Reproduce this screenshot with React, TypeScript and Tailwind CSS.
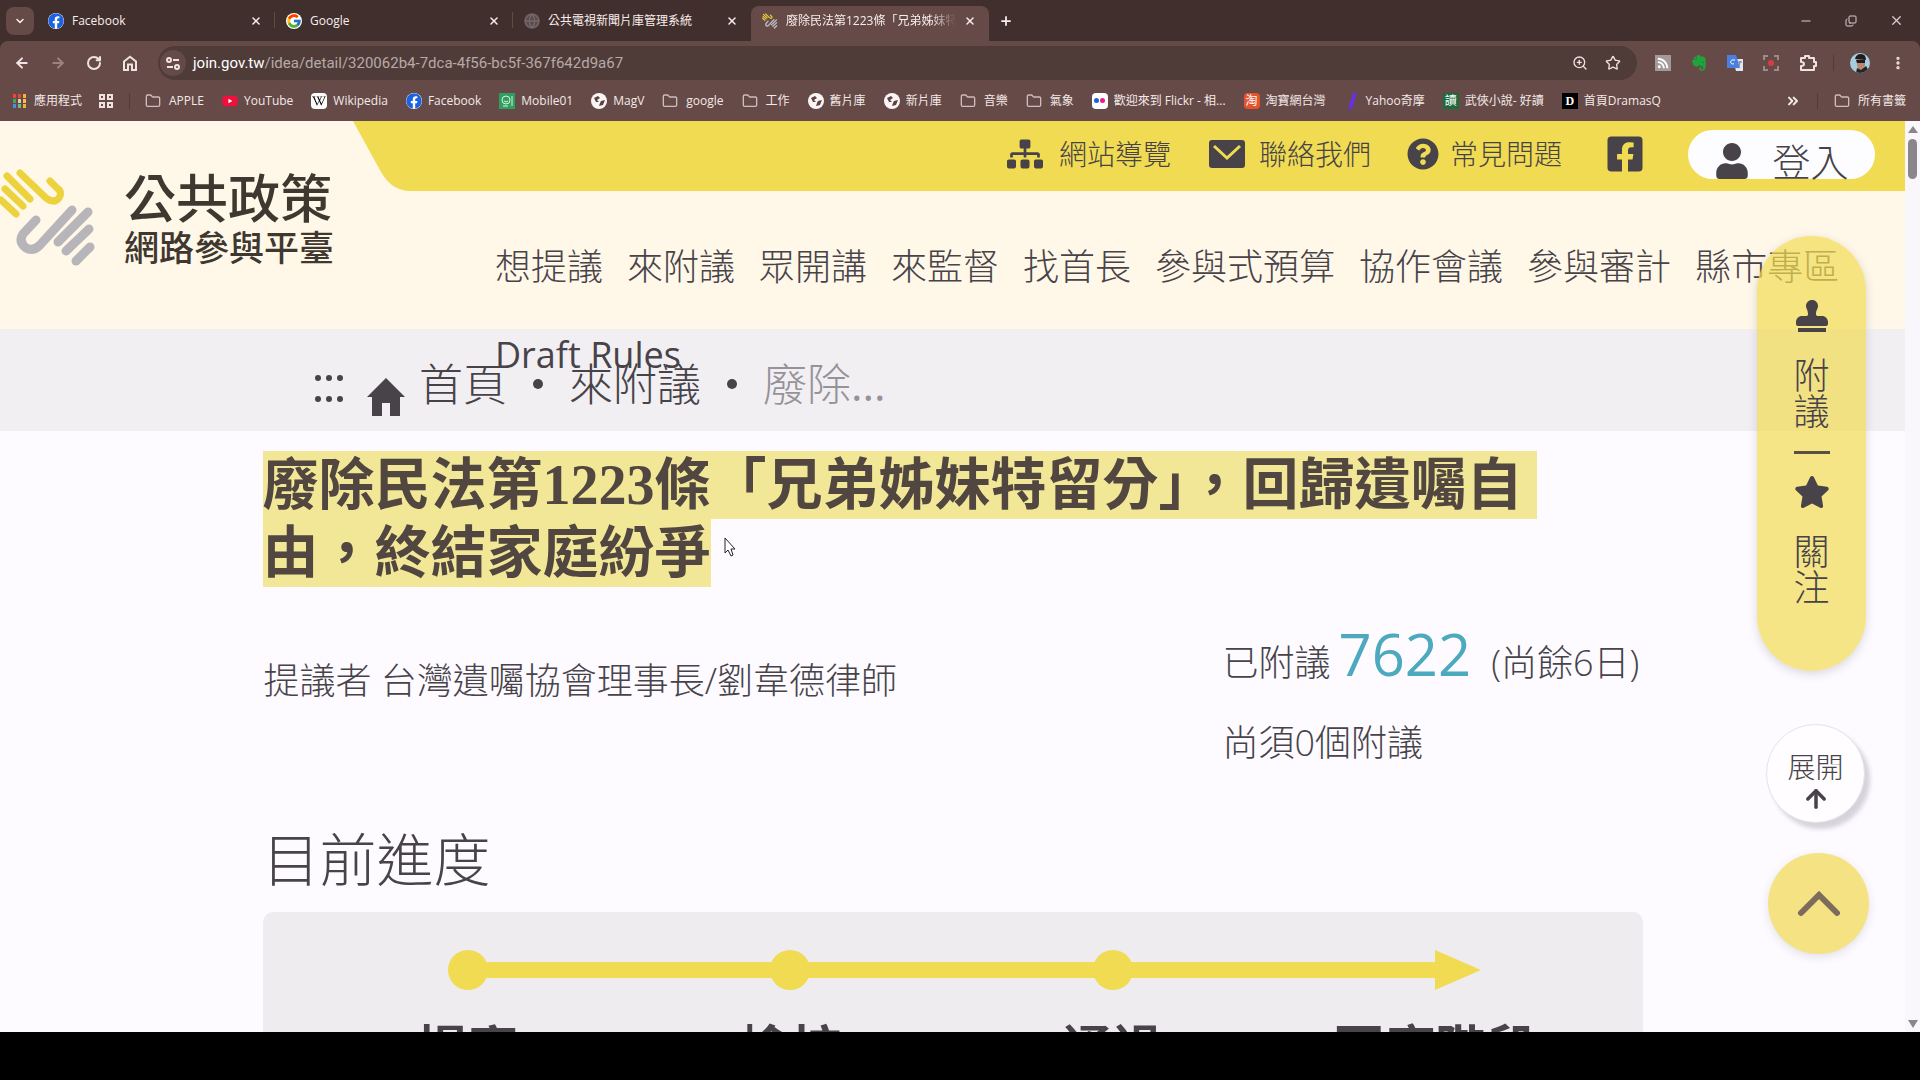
import type { ReactNode } from "react";
import {
  ArrowLeft,
  ArrowRight,
  ArrowUp,
  ChevronDown,
  ChevronsRight,
  ChevronUp,
  Copy,
  EllipsisVertical,
  Folder,
  Globe,
  Minus,
  Plus,
  RotateCw,
  Star,
  X,
  ZoomIn,
} from "lucide-react";
import {
  FaFacebook,
  FaFacebookSquare,
  FaQuestionCircle,
  FaRss,
  FaSitemap,
  FaStamp,
  FaStar,
  FaUser,
  FaWikipediaW,
  FaYoutube,
} from "react-icons/fa";
import { FcGoogle } from "react-icons/fc";
import { SiEvernote } from "react-icons/si";

const uiFont = "font-['Open_Sans','Noto_Sans_CJK_TC',sans-serif]";
const serifFont = "font-['Liberation_Serif','Noto_Sans_CJK_TC',serif]";

function HandsLogo({ className }: { className: string }) {
  return (
    <svg viewBox="0 0 96 100" className={className} fill="none" strokeLinecap="round" aria-hidden="true">
      <g stroke="#ecd23c" strokeWidth="7">
        <path d="M1 32 L16 46" />
        <path d="M5 21 L23 38" />
        <path d="M7 8 L30 31" />
        <path d="M20 5 L46 30 Q54 36 59 30 Q63 24 57 20 L50 13" />
      </g>
      <g stroke="#b7b5b9" strokeWidth="9">
        <path d="M36 52 L23 66 Q18 74 26 80 Q33 84 40 77 L72 42" />
        <path d="M88 44 L58 74" />
        <path d="M89 61 L66 83" />
        <path d="M90 79 L76 93" />
      </g>
    </svg>
  );
}

function EarthIcon() {
  return (
    <svg viewBox="0 0 16 16" className="size-4" aria-hidden="true">
      <circle cx="8" cy="8" r="8" fill="#fbf6f5" />
      <path d="M3 5 L7 3 L9 5 L6 7 L8 9 L5 9 Z M10 8 L14 7 L12 12 L8 13 L9 10 Z" fill="#5c4341" />
    </svg>
  );
}

function AppsIcon() {
  const colors = ["#e8453c", "#e8453c", "#f3b13a", "#42a65c", "#d9d2a0", "#f3c04a", "#4a8fe0", "#6fb6a0", "#efb23f"];
  return (
    <svg viewBox="0 0 16 16" className="size-4" aria-hidden="true">
      {colors.map((color, i) => (
        <rect key={i} x={1 + (i % 3) * 5} y={1 + Math.floor(i / 3) * 5} width="3" height="4" fill={color} />
      ))}
    </svg>
  );
}

function GridIcon() {
  return (
    <svg viewBox="0 0 16 16" className="size-4" fill="none" stroke="#efe3e1" strokeWidth="2" aria-hidden="true">
      <path d="M2 2h4v4H2zM10 2h4v4h-4zM2 10h4v4H2zM10 10h4v4h-4z" />
    </svg>
  );
}

function Tile({ className, children }: { className: string; children?: ReactNode }) {
  return (
    <span className={`flex size-4 shrink-0 items-center justify-center text-[12px] leading-4 ${className}`} aria-hidden="true">
      {children}
    </span>
  );
}

const folder = <Folder className="mr-[2px] size-4 text-[#cdbdbb]" strokeWidth={2} />;

const bookmarks: { label: string; icon: ReactNode }[] = [
  { label: "APPLE", icon: folder },
  {
    label: "YouTube",
    icon: (
      <span className="rounded-sm bg-[linear-gradient(#fff,#fff)] bg-[length:8px_8px] bg-center bg-no-repeat">
        <FaYoutube className="size-4 text-[#f0103c]" />
      </span>
    ),
  },
  {
    label: "Wikipedia",
    icon: (
      <Tile className="rounded-sm bg-white text-black">
        <FaWikipediaW className="size-[14px]" />
      </Tile>
    ),
  },
  { label: "Facebook", icon: <FaFacebook className="size-4 rounded-full bg-white text-[#1d62e0]" /> },
  {
    label: "Mobile01",
    icon: (
      <svg viewBox="0 0 16 16" className="size-4" fill="none" stroke="#d8f5e2" aria-hidden="true">
        <path d="M0 0h16v16H0z" fill="#2f9e5f" stroke="none" />
        <circle cx="7" cy="7" r="4" />
        <path d="M5 8q2 2 4 0M13 3v10M4 13h5" />
      </svg>
    ),
  },
  { label: "MagV", icon: <EarthIcon /> },
  { label: "google", icon: folder },
  { label: "工作", icon: folder },
  { label: "舊片庫", icon: <EarthIcon /> },
  { label: "新片庫", icon: <EarthIcon /> },
  { label: "音樂", icon: folder },
  { label: "氣象", icon: folder },
  {
    label: "歡迎來到 Flickr - 相...",
    icon: (
      <Tile className="gap-px rounded-sm bg-white">
        <span className="size-[5px] rounded-full bg-[#1c63d4]" />
        <span className="size-[5px] rounded-full bg-[#f0198a]" />
      </Tile>
    ),
  },
  { label: "淘寶網台灣", icon: <Tile className="rounded-sm bg-[#e5532d] text-white">淘</Tile> },
  {
    label: "Yahoo奇摩",
    icon: (
      <svg viewBox="0 0 16 16" className="size-4" aria-hidden="true">
        <path d="M9 0h4L8 16H4z" fill="#6b2fe0" />
      </svg>
    ),
  },
  { label: "武俠小說- 好讀", icon: <Tile className="bg-[#1d6b3d] text-white">讀</Tile> },
  { label: "首頁DramasQ", icon: <Tile className="bg-black font-['Liberation_Serif',serif] font-bold text-white">D</Tile> },
];

const tabs: { title: string; icon: ReactNode; active?: boolean }[] = [
  { title: "Facebook", icon: <FaFacebook className="size-4 rounded-full bg-white text-[#1d62e0]" /> },
  { title: "Google", icon: <FcGoogle className="size-4 rounded-full bg-white" /> },
  { title: "公共電視新聞片庫管理系統", icon: <Globe className="size-4 rounded-full bg-[#5a4a4a] text-[#75686a]" /> },
  { title: "廢除民法第1223條「兄弟姊妹特留分」", icon: <HandsLogo className="size-4" />, active: true },
];

function TabStrip() {
  return (
    <div className="flex h-[41px] items-center bg-[#412f2d] text-[12px] text-[#f6eeec]">
      <button aria-label="搜尋分頁" className="ml-[6px] flex size-7 items-center justify-center rounded-lg bg-[#664a48]">
        <ChevronDown className="size-3" strokeWidth={3} />
      </button>
      <div className="ml-[3px] flex self-stretch pt-[6px]" role="tablist">
        {tabs.map((tab, i) => (
          <div
            key={tab.title}
            className={`flex w-[238px] items-center gap-2 pr-[13px] pb-[6px] pl-[11px] ${
              tab.active
                ? "rounded-t-lg bg-[#664a48]"
                : i < 2
                  ? "bg-[linear-gradient(#5f4a47,#5f4a47)] bg-[length:1px_16px] bg-[position:right_6px] bg-no-repeat"
                  : ""
            }`}
          >
            {tab.icon}
            <button
              role="tab"
              aria-selected={!!tab.active}
              className={`min-w-0 flex-1 overflow-hidden text-left whitespace-nowrap ${
                tab.active ? "[mask-image:linear-gradient(to_right,black_85%,transparent)]" : ""
              }`}
            >
              {tab.title}
            </button>
            <button aria-label="關閉分頁">
              <X className="size-3" strokeWidth={3} />
            </button>
          </div>
        ))}
      </div>
      <button aria-label="新增分頁" className="ml-[10px]">
        <Plus className="size-[14px]" strokeWidth={3} />
      </button>
      <div className="mr-4 ml-auto flex items-center gap-8 text-[#d9cfcd]">
        <button aria-label="最小化">
          <Minus className="size-[14px]" />
        </button>
        <button aria-label="還原">
          <Copy className="size-3 -scale-x-100 rotate-180" />
        </button>
        <button aria-label="關閉">
          <X className="size-[15px]" />
        </button>
      </div>
    </div>
  );
}

function Toolbar() {
  return (
    <div className="flex items-center pt-[5px] pb-1 text-[#eee3e1]">
      <div className="flex gap-5 pl-[14px]">
        <button aria-label="上一頁">
          <ArrowLeft className="size-4" strokeWidth={3} />
        </button>
        <button aria-label="下一頁" className="text-[#9b8381]">
          <ArrowRight className="size-4" strokeWidth={3} />
        </button>
        <button aria-label="重新載入">
          <RotateCw className="size-4" strokeWidth={3} />
        </button>
        <button aria-label="首頁">
          <svg viewBox="0 0 16 16" className="size-4" fill="none" stroke="currentColor" strokeWidth="2">
            <path d="M2 6.5 L8 1.8 L14 6.5 V15 H10 V9.5 H6 V15 H2 Z" />
          </svg>
        </button>
      </div>
      <div className="ml-5 flex h-[34px] flex-1 items-center rounded-full bg-[#4f3c39] pr-4 pl-[2px]">
        <span className="flex size-[26px] items-center justify-center rounded-full bg-[#664a48]">
          <svg viewBox="0 0 14 14" className="size-[14px]" fill="none" stroke="currentColor" strokeWidth="2" aria-hidden="true">
            <circle cx="3" cy="4" r="2" />
            <path d="M7 4h6M1 11h6" />
            <circle cx="11" cy="11" r="2" />
          </svg>
        </span>
        <span className="ml-[7px] flex-1 font-['Roboto',sans-serif] text-[15px] leading-5 text-[#b7a9a7]">
          <span className="text-white">join.gov.tw</span>/idea/detail/320062b4-7dca-4f56-bc5f-367f642d9a67
        </span>
        <button aria-label="縮放" className="mr-[17px]">
          <ZoomIn className="size-4" />
        </button>
        <button aria-label="加入書籤">
          <Star className="size-4" />
        </button>
      </div>
      <div className="flex items-center gap-5 pr-[14px] pl-[18px]">
        <Tile className="bg-[#a39a99] text-white">
          <FaRss className="size-3" />
        </Tile>
        <SiEvernote className="size-4 text-[#1da53c]" />
        <svg viewBox="0 0 16 16" className="size-4" aria-hidden="true">
          <path d="M6 4h10v12H9z" fill="#e3e6ec" />
          <path d="M0 0h9l4 13H0z" fill="#4a7fe0" />
          <path d="M8 5H5.500a2 2 0 1 0 1.500 3.500" fill="none" stroke="#fff" strokeWidth="1" />
          <path d="M11 7h4M13 6v1l-1 4" fill="none" stroke="#6c7fa8" strokeWidth="1" />
        </svg>
        <svg viewBox="0 0 16 16" className="size-4" fill="none" stroke="#a08a88" strokeWidth="2" aria-hidden="true">
          <path d="M1 5V1h4M11 1h4v4M15 11v4h-4M5 15H1v-4" />
          <circle cx="8" cy="8" r="3" fill="#d63c44" stroke="none" />
        </svg>
        <svg viewBox="0 0 18 18" className="size-[18px]" fill="none" stroke="currentColor" strokeWidth="2" aria-hidden="true">
          <path d="M2 4h4V2h4v2h5v4h2v4h-2v4H2v-4q3 0 3-2t-3-2z" strokeLinejoin="round" />
        </svg>
        <span className="-mx-1 h-4 w-px bg-[#4f3c39]" />
        <svg viewBox="0 0 20 20" className="size-5 rounded-full" aria-hidden="true">
          <path d="M0 0h20v20H0z" fill="#a5cfe0" />
          <path d="M6 5h9v8l-3 4H8z" fill="#b98a6a" />
          <path d="M5 6q1-5 6-5t5 6l-10-1zM6 7h9v3H7z" fill="#1e1c20" />
          <path d="M7 15l4 2 5-4 4 7H6z" fill="#26242b" />
        </svg>
        <button aria-label="選單">
          <EllipsisVertical className="size-4" strokeWidth={3} />
        </button>
      </div>
    </div>
  );
}

function BookmarksBar() {
  return (
    <nav className="flex h-[37px] items-center gap-4 px-3 pb-1 text-[12px] whitespace-nowrap text-[#f3e9e7]">
      <a href="#apps" className="flex items-center gap-[6px]">
        <AppsIcon />
        應用程式
      </a>
      <a href="#groups" aria-label="分頁群組">
        <GridIcon />
      </a>
      <span className="-mx-px h-4 w-px bg-[#4f3c39]" />
      <div className="flex gap-[18px]">
        {bookmarks.map((b) => (
          <a key={b.label} href="#bookmark" className="flex items-center gap-[6px]">
            {b.icon}
            {b.label}
          </a>
        ))}
      </div>
      <button aria-label="更多書籤" className="ml-auto">
        <ChevronsRight className="size-4" strokeWidth={3} />
      </button>
      <span className="h-4 w-px bg-[#4f3c39]" />
      <a href="#all" className="mr-[2px] flex items-center gap-[6px]">
        {folder}
        所有書籤
      </a>
    </nav>
  );
}

const navLinks = [
  "想提議",
  "來附議",
  "眾開講",
  "來監督",
  "找首長",
  "參與式預算",
  "協作會議",
  "參與審計",
  "縣市專區",
  "Draft Rules",
];

function SiteHeader() {
  return (
    <header className="relative z-10 flex h-[208px] bg-[#fff7e8]">
      <a href="#home" className="flex w-[353px] shrink-0 items-start pt-[45px]">
        <HandsLogo className="mt-[2px] h-[100px] w-24 shrink-0" />
        <span className="ml-7 font-medium text-[#3f3830]">
          <span className="block text-[52px] leading-[64px]">公共政策</span>
          <span className="block text-[35px] leading-9">網路參與平臺</span>
        </span>
      </a>
      <div className="min-w-0 flex-1">
        <div className="flex h-[70px]">
          <svg viewBox="0 0 60 70" className="h-[70px] w-[60px] shrink-0" aria-hidden="true">
            <path d="M0 0 H60 V70 H57 Q39 70 28 51 Z" fill="#f1db52" />
          </svg>
          <div className="flex flex-1 items-center justify-end bg-[#f1db52] pr-[30px] pb-1 text-[28px] leading-9">
            <a href="#sitemap" className="mr-[38px] flex items-center gap-4">
              <FaSitemap className="size-9" />
              網站導覽
            </a>
            <a href="#contact" className="mr-9 flex items-center gap-[14px]">
              <svg viewBox="0 0 36 28" className="h-7 w-9" aria-hidden="true">
                <rect width="36" height="28" rx="3" fill="currentColor" />
                <path d="M5 6 L18 18 L31 6" fill="none" stroke="#f1db52" strokeWidth="3" />
              </svg>
              聯絡我們
            </a>
            <a href="#faq" className="mr-[43px] flex items-center gap-[11px]">
              <FaQuestionCircle className="size-8" />
              常見問題
            </a>
            <a href="#facebook" aria-label="Facebook" className="mr-[43px]">
              <FaFacebookSquare className="size-10" />
            </a>
            <a
              href="#login"
              className="flex h-[49px] w-[187px] items-end justify-center gap-[22px] rounded-full bg-[#fdfdff] text-[38px] leading-9"
            >
              <FaUser className="size-9" />
              <span className="h-9">登入</span>
            </a>
          </div>
        </div>
        <nav className="pt-8 pl-[142px]">
          <ul className="flex flex-wrap gap-x-6 text-[36px] leading-[88px]">
            {navLinks.map((label) => (
              <li key={label} className="last:font-normal">
                <a href="#nav">{label}</a>
              </li>
            ))}
          </ul>
        </nav>
      </div>
    </header>
  );
}

function Dot() {
  return <span className="size-[10px] rounded-full bg-[#474349]" aria-hidden="true" />;
}

function Breadcrumb() {
  return (
    <nav className="flex h-[102px] items-center bg-[#f2eff3] pt-2 pl-[315px] text-[44px] leading-[60px]">
      <a href="#main" aria-label="主要內容" className="grid grid-cols-3 gap-x-[5px] gap-y-[15px] pt-2">
        {Array.from({ length: 6 }, (_, i) => (
          <span key={i} className="size-[6px] rounded-full bg-[#474349]" />
        ))}
      </a>
      <svg viewBox="0 0 38 38" className="mt-[26px] ml-[24px] size-[38px]" aria-hidden="true">
        <path d="M19 0 L38 19 H33 V38 H23 V25 H15 V38 H5 V19 H0 Z" fill="#474349" />
      </svg>
      <a href="#home" className="mr-[26px] ml-[14px]">
        首頁
      </a>
      <Dot />
      <a href="#endorse" className="mx-[26px]">
        來附議
      </a>
      <Dot />
      <span className="ml-[26px] text-[#96929a]">
        廢除<span className="font-normal">...</span>
      </span>
    </nav>
  );
}

const steps = ["提案", "檢核", "通過", "回應階段"];

function Progress() {
  return (
    <section>
      <h2 className="text-[57px] leading-[80px]">目前進度</h2>
      <div className="mt-[13px] h-60 rounded-[10px] bg-[#eeecef] pt-[38px] pr-[46px] pl-11">
        <ol className="grid grid-cols-4 text-center text-[51px] leading-[60px] font-bold">
          {steps.map((step, i) => (
            <li key={step}>
              <div className="flex h-10 items-center">
                <span className={`h-4 flex-1 ${i > 0 ? "bg-[#f1db52]" : ""}`} />
                {i < steps.length - 1 ? (
                  <>
                    <span className="-mx-1 size-10 rounded-full bg-[#f1db52]" />
                    <span className="h-4 flex-1 bg-[#f1db52]" />
                  </>
                ) : (
                  <span className="flex flex-1">
                    <svg viewBox="0 0 46 40" className="h-10 w-[46px]" aria-hidden="true">
                      <path d="M0 0 L46 20 L0 40 Z" fill="#f1db52" />
                    </svg>
                  </span>
                )}
              </div>
              <span className="mt-7 block">{step}</span>
            </li>
          ))}
        </ol>
      </div>
    </section>
  );
}

function FloatingActions() {
  return (
    <div className="absolute top-[115px] right-[36px] z-20 flex flex-col items-end">
      <div className="mr-[3px] flex h-[435px] w-[109px] flex-col items-center rounded-full bg-[#f1db52]/70 pt-16 text-[36px] leading-9 shadow-[0_3px_10px_rgba(80,70,100,0.2)]">
        <button className="flex w-9 flex-col items-center">
          <FaStamp className="size-8" />
          <span className="mt-[26px]">附議</span>
        </button>
        <span className="mt-[21px] h-[3px] w-9 bg-[#5c5140]" />
        <button className="mt-5 flex w-9 flex-col items-center">
          <FaStar className="size-9" />
          <span className="mt-6">關注</span>
        </button>
      </div>
      <button className="mt-[53px] mr-1 flex size-[99px] flex-col items-center rounded-full border border-[#e6e2e8] bg-[#fffdff] pt-6 text-[28px] leading-9 shadow-[5px_6px_4px_rgba(80,70,90,0.22)]">
        展開
        <ArrowUp className="size-7" strokeWidth={3} />
      </button>
      <button
        aria-label="回到頂端"
        className="mt-[30px] flex size-[101px] items-center justify-center rounded-full bg-[#f5e383] text-[#7d6c5c] shadow-[0_3px_8px_rgba(80,70,100,0.15)]"
      >
        <svg viewBox="0 0 44 26" className="h-[26px] w-11" fill="none" stroke="currentColor" strokeWidth="6" strokeLinecap="round">
          <path d="M4 22 L22 4 L40 22" />
        </svg>
      </button>
    </div>
  );
}

function Scrollbar() {
  return (
    <div className="flex w-[15px] shrink-0 flex-col items-center bg-[#faf7fc] py-1" aria-hidden="true">
      <svg viewBox="0 0 10 8" className="h-2 w-[10px]">
        <path d="M5 1 L10 8 H0 Z" fill="#8a878c" />
      </svg>
      <span className="mt-[6px] h-10 w-[9px] rounded-full bg-[#8a878c]" />
      <svg viewBox="0 0 10 8" className="mt-auto h-2 w-[10px]">
        <path d="M5 8 L10 0 H0 Z" fill="#8a878c" />
      </svg>
    </div>
  );
}

export default function App() {
  return (
    <div className={`flex h-screen flex-col overflow-hidden bg-black ${uiFont}`}>
      <div className="shrink-0 bg-[#412f2d]">
        <TabStrip />
        <div className="rounded-t-lg bg-[#664a48]">
          <Toolbar />
          <BookmarksBar />
        </div>
      </div>
      <div className="flex min-h-0 flex-1 bg-[#fdfbff]">
        <div className="relative min-w-0 flex-1 overflow-hidden font-light text-[#474349]">
          <SiteHeader />
          <Breadcrumb />
          <main className="mx-auto max-w-[1380px] pt-5">
            <h1 className={`text-[56px] leading-[68px] font-bold text-[#514640] ${serifFont}`}>
              <span className="block w-fit bg-[#f1e797] pr-[14px]">廢除民法第1223條「兄弟姊妹特留分」，回歸遺囑自</span>
              <span className="block w-fit bg-[#f1e797]">由，終結家庭紛爭</span>
            </h1>
            <div className="mt-[26px] flex justify-between text-[36px]">
              <p className="pt-[38px] pl-px leading-[60px]">提議者 台灣遺囑協會理事長/劉韋德律師</p>
              <div className="w-[420px] pt-px whitespace-nowrap">
                <p className="flex items-baseline leading-[80px]">
                  已附議
                  <span className="mr-5 ml-2 text-[58px] font-normal text-[#4da9bd]">7622</span>
                  (尚餘6日)
                </p>
                <p className="leading-[80px]">尚須0個附議</p>
              </div>
            </div>
            <div className="mt-9">
              <Progress />
            </div>
          </main>
          <FloatingActions />
          <svg viewBox="0 0 12 20" className="absolute top-[416px] left-[724px] h-5 w-3" aria-hidden="true">
            <path d="M1 1 V16 L4 13 L7 19 L9 18 L7 12 H11 Z" fill="#fff" stroke="#222" strokeWidth="1" />
          </svg>
        </div>
        <Scrollbar />
      </div>
      <div className="h-12 shrink-0 bg-black" />
    </div>
  );
}
